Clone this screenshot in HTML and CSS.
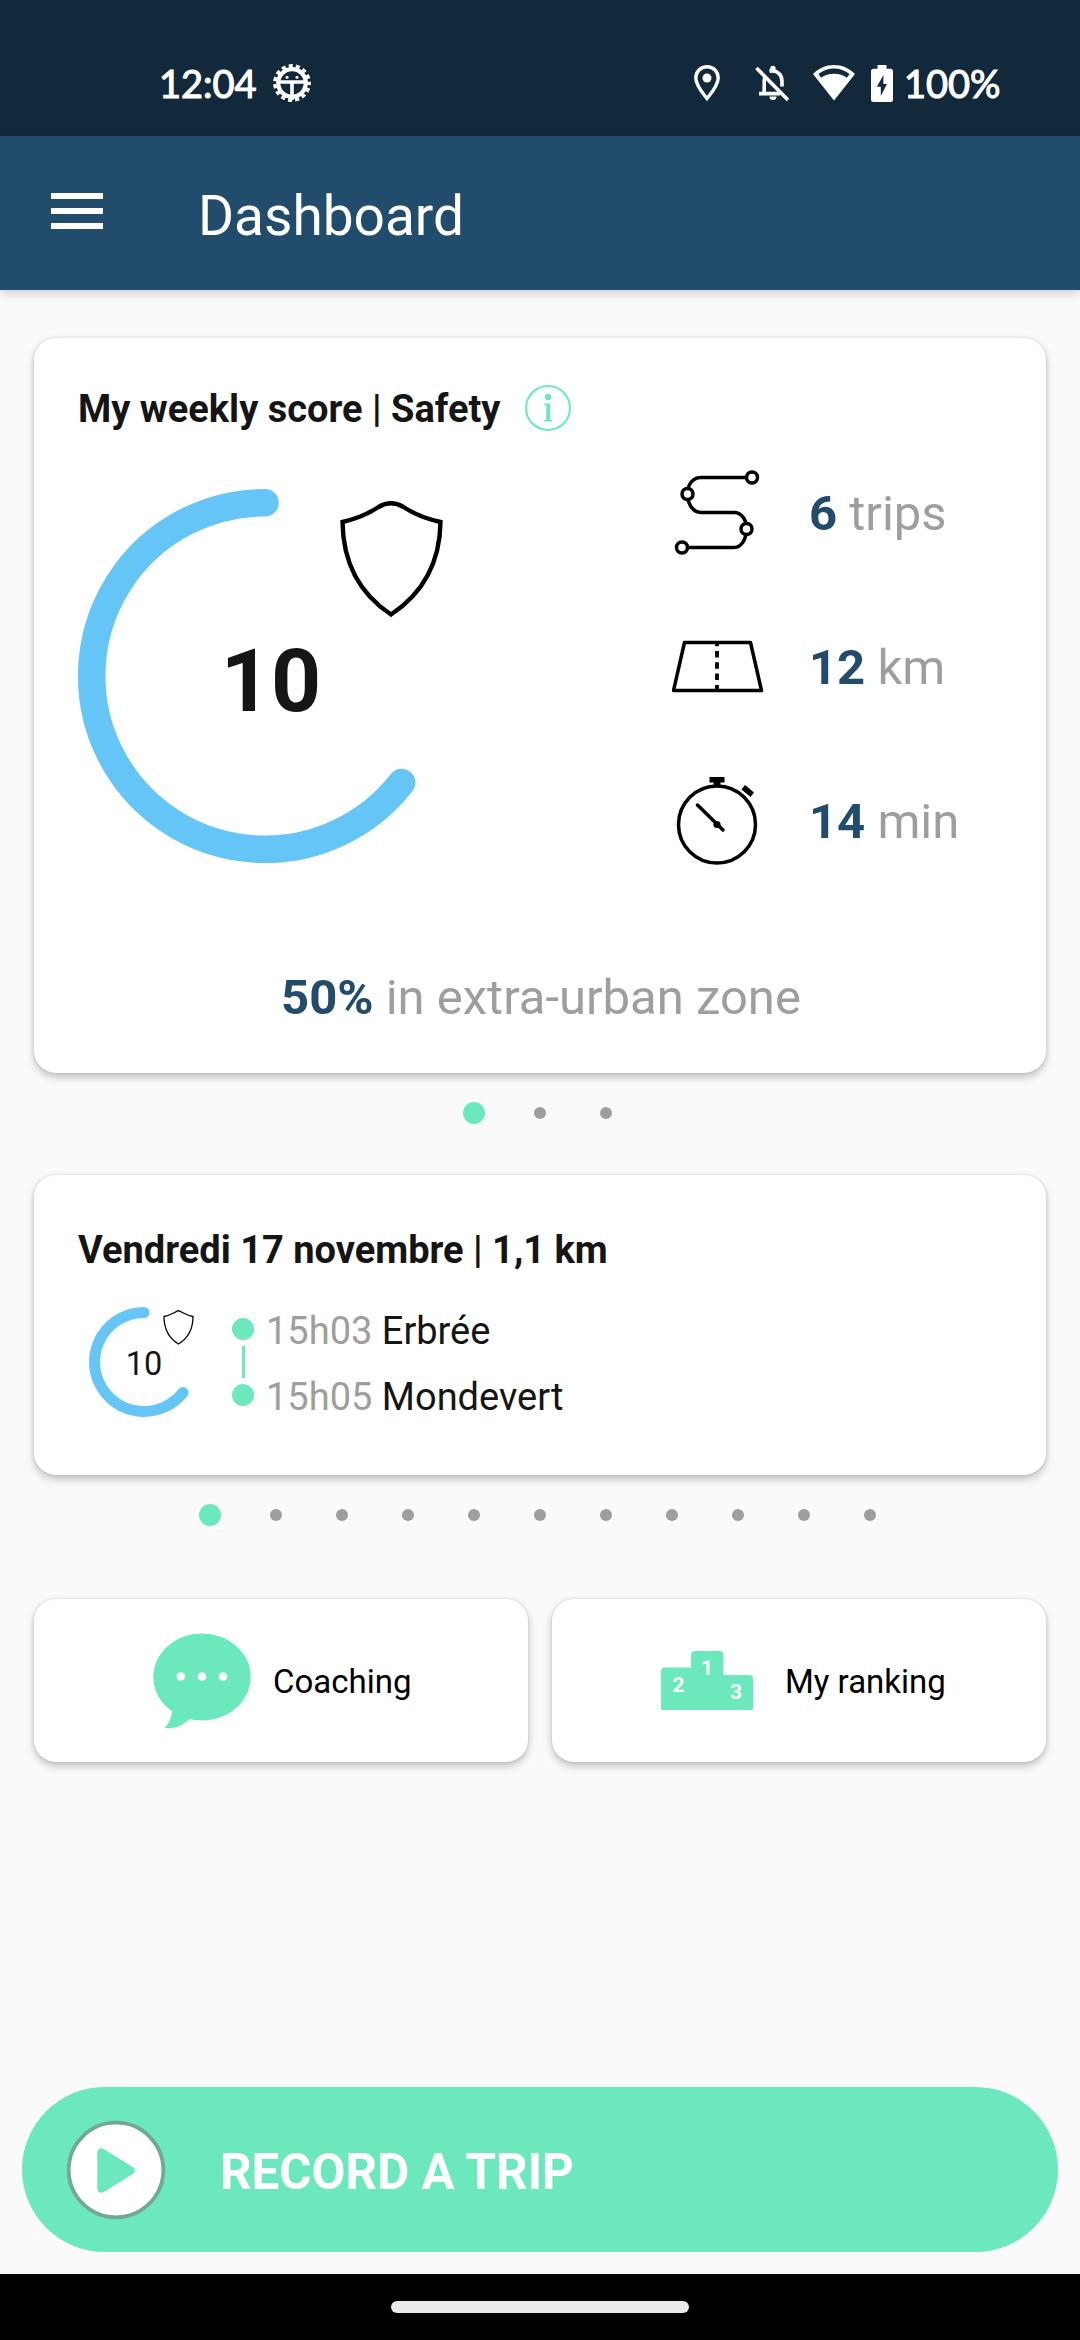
FILE: index.html
```
<!DOCTYPE html>
<html lang="en">
<head>
<meta charset="utf-8">
<title>Dashboard</title>
<link rel="stylesheet" href="styles.css">
</head>
<body>
<div class="screen">
  <div class="status-bar">
    <span class="clock">12:04</span>
    <svg class="gear" width="40" height="40" viewBox="-20 -20 40 40"><circle r="13.800" fill="none" stroke="#fff" stroke-width="4.200"/><circle r="16.800" fill="none" stroke="#fff" stroke-width="4.200" stroke-dasharray="4 3.037" stroke-dashoffset="2"/><path d="M-14-1H14M0-1V17" stroke="#fff" stroke-width="3.600" fill="none"/><circle cx="-5" cy="-5.700" r="1.500" fill="#fff"/><circle cx="5" cy="-5.700" r="1.500" fill="#fff"/></svg>
    <div class="status-right">
      <svg class="pin" width="26" height="36" viewBox="0 0 26 36"><path d="M13 1.8C6.600 1.800 1.800 6.700 1.800 13c0 7.500 8 16.500 11.200 20.500C16.200 29.500 24.200 20.500 24.200 13 24.200 6.700 19.400 1.800 13 1.800Z" fill="none" stroke="#fff" stroke-width="3.400"/><circle cx="13" cy="13" r="4.500" fill="#fff"/></svg>
      <svg class="bell" width="34" height="36" viewBox="0 0 34 36"><g fill="none" stroke="#fff" stroke-width="3.600"><path d="M1.500 3 33 35"/><path d="M4 28.600H25M9.200 28V16.500c0-1.600.3-3 .8-4.200M14.500 6.300C22 4.500 27 9.500 27 16v5.500"/></g><path d="M15.200 5V3.500a2.700 2.700 0 0 1 5.400 0V5ZM14.500 31.500h7a3.500 3.500 0 0 1-7 0Z" fill="#fff"/></svg>
      <svg class="wifi" width="42" height="36" viewBox="0 0 42 36"><path d="M21 0C13 0 5.500 3.300 0 9L21 35.500 42 9C36.500 3.300 29 0 21 0Zm0 3.600c5.800 0 11.200 2 15.600 5.500l-2.800 3.600C30.300 10.300 26 8.800 21 8.800S11.700 10.300 8.200 12.700L5.400 9.100C9.800 5.600 15.200 3.600 21 3.600Z" fill="#fff"/></svg>
      <svg class="battery" width="22" height="37" viewBox="0 0 22 37"><path d="M6.500 0h9v3.700H19.500Q22 3.700 22 6.200V34.500Q22 37 19.500 37H2.500Q0 37 0 34.500V6.200Q0 3.700 2.500 3.700h4Z" fill="#fff"/><path d="M12.500 10 5.800 21.800H9.800V31L16 19H12.300Z" fill="#12283b"/></svg>
      <span class="level">100%</span>
    </div>
  </div>

  <header class="app-bar">
    <div class="menu"><i></i><i></i><i></i></div>
    <h1>Dashboard</h1>
  </header>

  <main>
    <section class="card score-card">
      <div class="card-head">
        <h2>My weekly score | Safety</h2>
        <svg class="info" width="48" height="48" viewBox="-24 -24 48 48"><circle r="22" fill="none" stroke="#6ce9bc" stroke-width="2"/><circle cy="-11" r="3.200" fill="#6ce9bc"/><path d="M-3.800-4.500H2V11.800H4.200V13.600H-4V11.800H-1.800V-2.700H-3.800Z" fill="#6ce9bc"/></svg>
      </div>
      <div class="score-body">
        <svg class="gauge" width="374" height="374" viewBox="-187 -187 374 374"><path d="M0-173.300A173.300 173.300 0 1 0 136.700 106.500" fill="none" stroke="#65c5f7" stroke-width="27.500" stroke-linecap="round"/><path d="M77.500-154C93-157.500 106-164 113.500-169Q126-176.500 138.500-169C146-164 159-157.500 175.500-154C175-116 160-84 126-61.500C92-84 78-116 77.500-154Z" fill="none" stroke="#000" stroke-width="4.400"/><text class="gauge-value" x="6" y="35">10</text></svg>
        <div class="stats">
          <div class="stat"><svg width="96" height="96" viewBox="0 0 96 96"><g fill="none" stroke="#000" stroke-width="3.500"><path d="M76 13.500H29C21 13.500 15.500 20 15.500 30S21 48.500 29 48.500H62C70 48.500 74.500 56 74.500 65S70 83.500 62 83.500H15"/><g fill="#fff"><circle cx="80" cy="13.500" r="5.500"/><circle cx="15.500" cy="30" r="5.500"/><circle cx="74.500" cy="65" r="5.500"/><circle cx="10" cy="83.500" r="5.500"/></g></g></svg><span><b>6</b> trips</span></div>
          <div class="stat"><svg width="96" height="96" viewBox="0 0 96 96"><path d="M12.500 24.500H78.500L89.500 72.500H1.500Z" fill="none" stroke="#000" stroke-width="3.500" stroke-linejoin="round"/><path d="M45 25V72" stroke="#000" stroke-width="3.800" stroke-dasharray="6.500 4.800" stroke-dashoffset="3.300"/></svg><span><b>12</b> km</span></div>
          <div class="stat"><svg width="96" height="96" viewBox="0 0 96 96"><circle cx="45" cy="52.500" r="38.500" fill="none" stroke="#000" stroke-width="3.500"/><path d="M37.500 5h15v5.500h-4V14h-7v-3.500h-4ZM73 13l9 7.500-3.500 4.500-9-7.500Z"/><path d="M25.500 33 51 58" stroke="#000" stroke-width="3.500" stroke-linecap="round"/><circle cx="45" cy="52.500" r="3.600"/></svg><span><b>14</b> min</span></div>
        </div>
      </div>
      <p class="zone"><b>50%</b> in extra-urban zone</p>
    </section>

    <div class="dots"><i class="on"></i><i></i><i></i></div>

    <section class="card trip-card">
      <h2>Vendredi 17 novembre | 1,1 km</h2>
      <div class="trip-body">
        <svg class="mini" width="110" height="110" viewBox="-55 -55 110 110"><path d="M0-49.500A49.500 49.500 0 1 0 39 30.500" fill="none" stroke="#65c5f7" stroke-width="11" stroke-linecap="round"/><path d="M20-45.500C26-46.500 30-49.500 34.500-51.300C39-49.500 43-46.500 49-45.500C49-34 44.500-24 34.500-18C24.500-24 20-34 20-45.500Z" fill="none" stroke="#000" stroke-width="1.300"/><text class="mini-value" x="0" y="12.500">10</text></svg>
        <div class="rail"><i></i><b></b><i></i></div>
        <div class="stops">
          <div><span>15h03</span> Erbrée</div>
          <div><span>15h05</span> Mondevert</div>
        </div>
      </div>
    </section>

    <div class="dots trip-dots"><i class="on"></i><i></i><i></i><i></i><i></i><i></i><i></i><i></i><i></i><i></i><i></i></div>

    <div class="tiles">
      <div class="card tile coaching">
        <svg width="98" height="96" viewBox="0 0 98 96"><ellipse cx="49" cy="44" rx="48.700" ry="43.500" fill="#6ce9bc"/><path d="M19.500 77C18.500 84 16 90.500 11.500 95C21 96.500 31 92.500 38.500 84Z" fill="#6ce9bc"/><g fill="#fff"><circle cx="27.800" cy="43.500" r="4.300"/><circle cx="49" cy="43.500" r="4.300"/><circle cx="70" cy="43.500" r="4.300"/></g></svg>
        <span>Coaching</span>
      </div>
      <div class="card tile ranking">
        <svg width="92" height="59" viewBox="0 0 92 59"><path d="M0 57.500V20.500Q0 16.500 4 16.500H30V4Q30 0 34 0H58.500Q62.500 0 62.500 4V24H88Q92 24 92 28V57.500Q92 59 90.500 59H1.500Q0 59 0 57.500Z" fill="#6ce9bc"/><g class="podium"><text x="46" y="23.500">1</text><text x="17.500" y="40.500">2</text><text x="75" y="48">3</text></g></svg>
        <span>My ranking</span>
      </div>
    </div>
  </main>

  <div class="record">
    <svg width="100" height="100" viewBox="-50 -50 100 100"><circle r="47.300" fill="#fff" stroke="#73a898" stroke-width="3.800"/><path d="M-14.500-17.500V18.500L14.500.5Z" fill="#6ce9bc" stroke="#6ce9bc" stroke-width="8.500" stroke-linejoin="round"/></svg>
    <span>RECORD A TRIP</span>
  </div>
  <div class="nav-bar"><i></i></div>
</div>
</body>
</html>
```
FILE: styles.css
```
* { box-sizing: border-box; margin: 0; padding: 0; }
body { width: 1080px; height: 2340px; font-family: Roboto, "Liberation Sans", sans-serif; background: #fafafa; overflow: hidden; }
svg { display: block; flex: none; }
.screen { display: flex; flex-direction: column; height: 2340px; }

.status-bar { height: 136px; flex: none; background: #12283b; color: #fff; display: flex; align-items: flex-start; padding: 63px 79px 0 159px; font-family: Lato, sans-serif; font-weight: 400; font-size: 38px; line-height: 40px; white-space: nowrap; -webkit-text-stroke: 1.1px #fff; }
.status-bar svg { -webkit-text-stroke: 0; }
.clock { width: 113px; }
.status-right { display: flex; margin-left: auto; }
.status-right svg { margin-top: 2px; }
.bell { margin-left: 35px; }
.wifi { margin-left: 24px; }
.battery { margin-left: 16px; }
.level { margin-left: 11px; width: 97px; }

.app-bar { height: 154px; flex: none; background: #214c6b; display: flex; align-items: center; padding: 0 51px; box-shadow: 0 3px 10px rgba(0,0,0,.18); color: #fff; }
.menu { width: 52px; display: flex; flex-direction: column; gap: 9px; margin-bottom: 4px; }
.menu i { height: 6px; background: #fff; }
h1 { font-weight: 400; font-size: 55px; line-height: 64px; margin-left: 95px; padding-top: 6px; }

main { flex: 1; padding: 48px 34px 0; }
.card { background: #fff; border-radius: 22px; box-shadow: 0 4px 8px rgba(0,0,0,.24), 0 0 3px rgba(0,0,0,.12); }
h2 { font-weight: 700; font-size: 38px; line-height: 46px; color: #151515; white-space: nowrap; }

.score-card { height: 735px; padding: 46px 44px 0; }
.card-head { display: flex; align-items: center; height: 48px; }
.card-head h2 { padding-top: 2px; }
.info { margin-left: 24px; }
.score-body { display: flex; margin-top: 31px; height: 484px; }
.gauge { margin-top: 26px; overflow: visible; }
.gauge-value { font-size: 87.500px; font-weight: 700; text-anchor: middle; fill: #151515; }
.stats { margin: -28px 0 0 220px; }
.stat { display: flex; align-items: center; height: 154px; }
.stat span { font-size: 49px; line-height: 58px; margin-left: 41px; padding-top: 4px; color: #9e9e9e; white-space: nowrap; }
.stat b, .zone b { color: #214c6b; }
.zone { font-size: 49px; line-height: 58px; text-align: center; color: #9e9e9e; margin-top: 22px; padding-left: 2px; }

.dots { height: 22px; margin-top: 29px; display: flex; justify-content: center; align-items: center; }
.dots i { width: 12px; height: 12px; border-radius: 50%; background: #9e9e9e; margin: 0 27px; }
.dots i.on { width: 22px; height: 22px; background: #6ce9bc; margin: 0 22px; }

.trip-card { margin-top: 51px; height: 300px; padding: 52px 44px 0; }
.trip-body { display: flex; margin-top: 34px; height: 112px; padding-left: 11px; }
.mini { overflow: visible; }
.mini-value { font-size: 32.500px; text-anchor: middle; fill: #151515; }
.rail { width: 22px; margin: 11px 0 0 33px; display: flex; flex-direction: column; align-items: center; }
.rail i { width: 22px; height: 22px; border-radius: 50%; background: #6ce9bc; }
.rail b { width: 3px; height: 32px; margin: 6px 0; background: #6ce9bc; }
.stops { margin: -9px 0 0 12px; font-size: 38px; line-height: 66px; color: #151515; }
.stops div { height: 66px; white-space: nowrap; }
.stops span { color: #9e9e9e; }

.tiles { display: flex; gap: 24px; margin-top: 73px; }
.tile { width: 494px; height: 163px; display: flex; align-items: center; font-size: 33px; line-height: 40px; color: #000; white-space: nowrap; }
.coaching { padding-left: 119px; }
.coaching span { margin-left: 22px; padding-top: 3px; }
.ranking { padding-left: 109px; }
.ranking span { margin-left: 32px; padding-top: 3px; }
.podium text { font-size: 21px; font-weight: 700; text-anchor: middle; fill: #fff; }

.record { height: 165px; flex: none; margin: 0 22px 22px; border-radius: 83px; background: #6ce9bc; display: flex; align-items: center; padding-left: 44px; color: #fff; font-weight: 700; font-size: 49.300px; line-height: 60px; }
.record span { margin-left: 54px; padding-top: 4px; white-space: nowrap; }
.nav-bar { height: 66px; flex: none; background: #000; display: flex; justify-content: center; padding-top: 27px; }
.nav-bar i { width: 298px; height: 12px; border-radius: 6px; background: #ebebeb; }
```
